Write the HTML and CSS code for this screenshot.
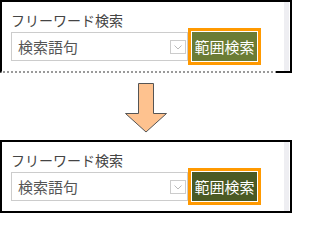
FILE: index.html
```html
<!DOCTYPE html>
<html lang="ja">
<head>
<meta charset="utf-8">
<link rel="stylesheet" href="styles.css">
</head>
<body>
<div class="panel panel-top">
  <div class="content">
    <div class="label">フリーワード検索</div>
    <div class="row">
      <div class="field">
        <span class="placeholder">検索語句</span>
        <span class="drop"><svg width="14" height="12" viewBox="0 0 14 12"><path d="M3.5 4.5 L7 8 L10.5 4.5" fill="none" stroke="#bbb" stroke-width="1"/></svg></span>
      </div>
      <div class="btn btn-light">範囲検索</div>
    </div>
  </div>
  <div class="strip"></div>
</div>
<div class="middle">
  <svg class="arrow" width="44" height="51" viewBox="0 0 44 51"><path d="M14.5 1.5 H29.5 V31.5 H42.5 L22 50 L1.5 31.5 H14.5 Z" fill="#fec28f" stroke="#555" stroke-width="1"/></svg>
</div>
<div class="panel panel-bottom">
  <div class="content">
    <div class="label">フリーワード検索</div>
    <div class="row">
      <div class="field">
        <span class="placeholder">検索語句</span>
        <span class="drop"><svg width="14" height="12" viewBox="0 0 14 12"><path d="M3.5 4.5 L7 8 L10.5 4.5" fill="none" stroke="#bbb" stroke-width="1"/></svg></span>
      </div>
      <div class="btn btn-dark">範囲検索</div>
    </div>
  </div>
  <div class="strip"></div>
</div>
</body>
</html>
```
FILE: styles.css
```css
* { box-sizing: border-box; }
html, body { margin: 0; padding: 0; }
body {
  width: 292px;
  height: 213px;
  background: #fff;
  font-family: "Noto Sans CJK JP", "Noto Sans", sans-serif;
  overflow: hidden;
}
.panel {
  position: relative;
  display: flex;
  height: 73px;
  border: 2px solid #000;
}
.panel-top {
  border-bottom: 2px dotted #9a9a9a;
}
.panel-top::after {
  content: "";
  position: absolute;
  right: -2px;
  bottom: -2px;
  width: 16px;
  height: 2px;
  background: #000;
}
.content {
  flex: 1;
  padding: 11px 0 0 9px;
}
.strip {
  width: 5px;
  margin-right: 1px;
  background: #eeeef2;
}
.label {
  font-size: 14px;
  line-height: 15px;
  color: #444;
}
.row {
  display: flex;
  align-items: center;
}
.field {
  display: flex;
  align-items: center;
  width: 177px;
  height: 29px;
  border: 1px solid #ccc;
  padding-left: 6px;
}
.placeholder {
  font-size: 15px;
  color: #555;
  line-height: 20px;
}
.drop {
  margin-left: auto;
  margin-right: 1px;
  width: 16px;
  height: 14px;
  border: 1px solid #ccc;
  display: flex;
  align-items: center;
  justify-content: center;
}
.drop svg { display: block; }
.btn {
  width: 73px;
  height: 37px;
  border: 3px solid #ff9900;
  box-shadow: inset 0 0 0 1px #fff;
  color: #fff;
  font-size: 15px;
  display: flex;
  align-items: center;
  justify-content: center;
  letter-spacing: 0;
}
.btn-light { background: #6b7c35; }
.btn-dark { background: #4a5a24; }
.middle {
  height: 67px;
  display: flex;
  justify-content: center;
  align-items: flex-start;
}
.arrow {
  display: block;
  margin-top: 9px;
}
```
